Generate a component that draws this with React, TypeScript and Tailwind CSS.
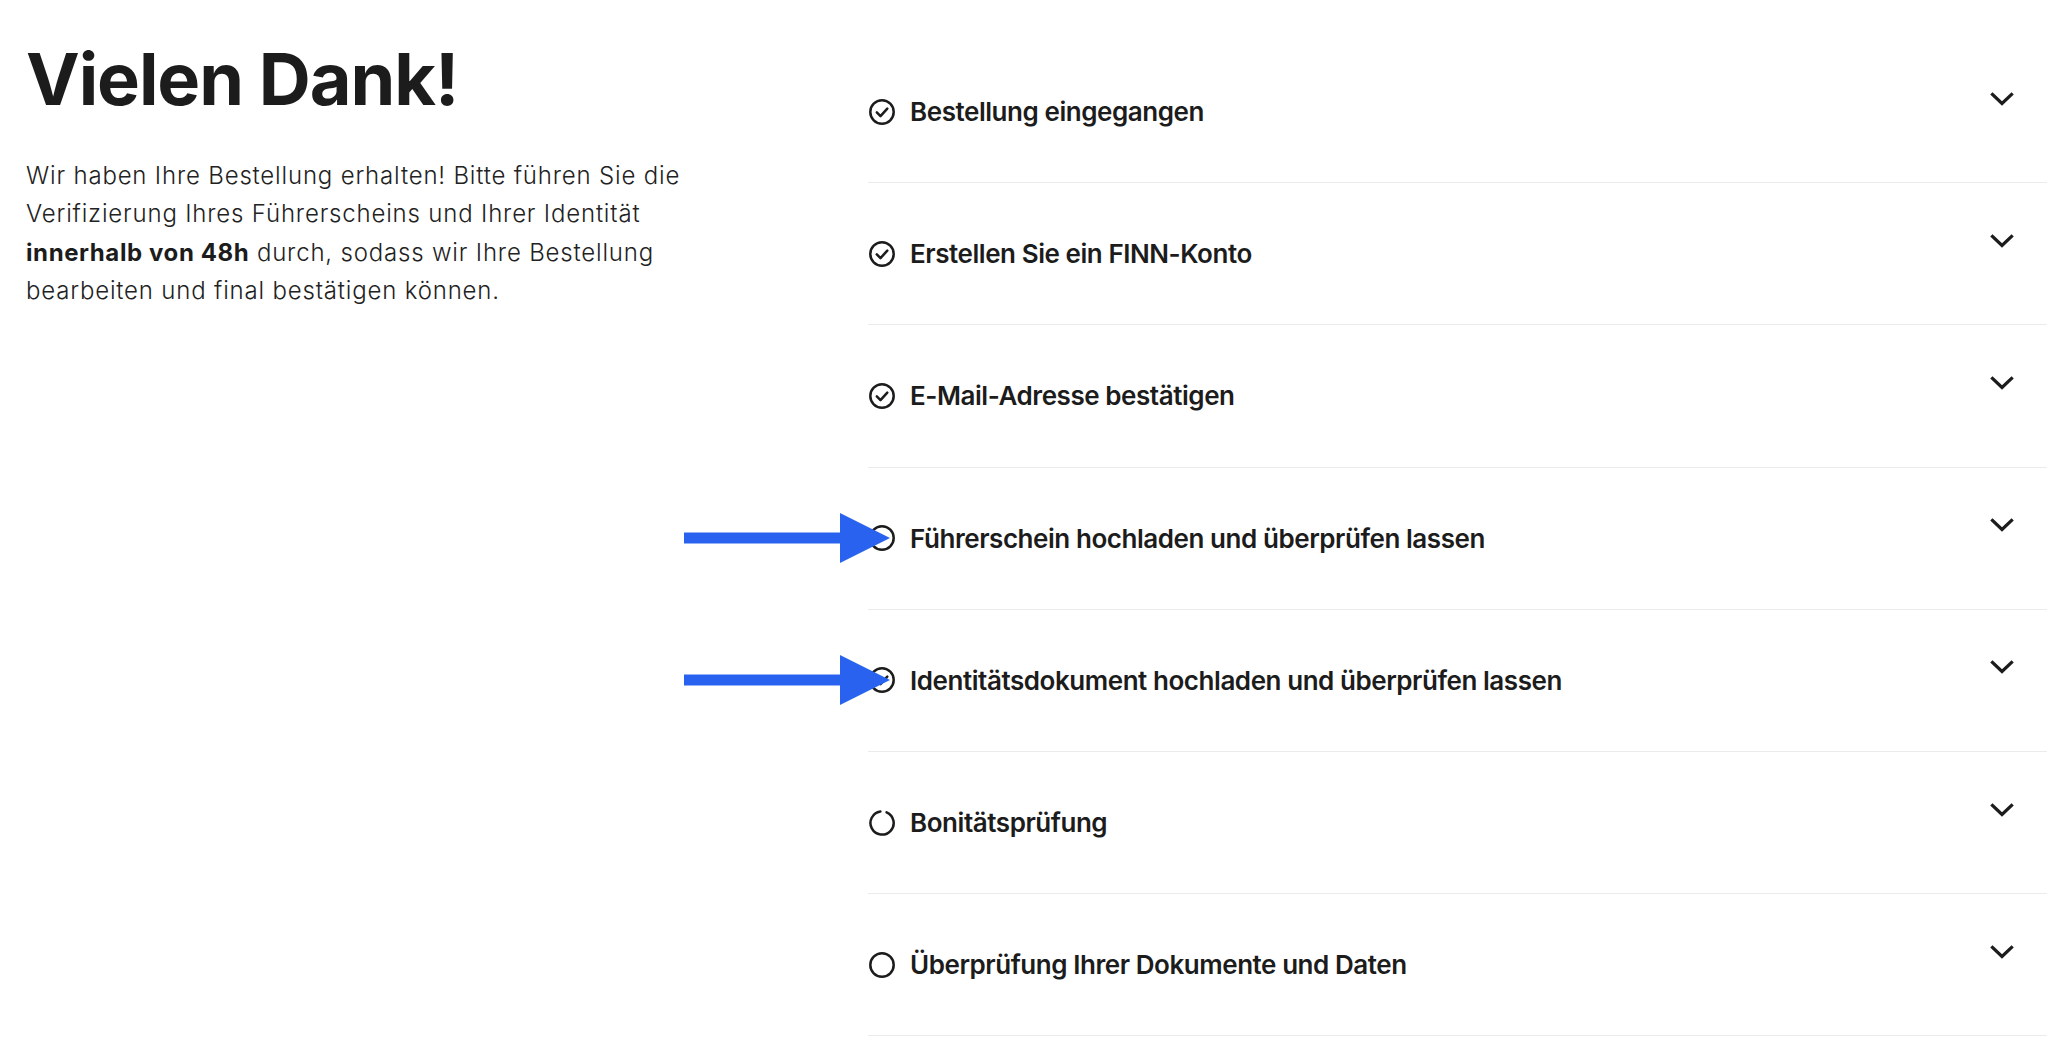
import React from 'react';

type Status = 'done' | 'open' | 'loading';

const steps: { title: string; status: Status; arrow?: boolean }[] = [
  { title: 'Bestellung eingegangen', status: 'done' },
  { title: 'Erstellen Sie ein FINN-Konto', status: 'done' },
  { title: 'E-Mail-Adresse bestätigen', status: 'done' },
  { title: 'Führerschein hochladen und überprüfen lassen', status: 'open', arrow: true },
  { title: 'Identitätsdokument hochladen und überprüfen lassen', status: 'done', arrow: true },
  { title: 'Bonitätsprüfung', status: 'loading' },
  { title: 'Überprüfung Ihrer Dokumente und Daten', status: 'open' },
];

const StatusIcon = ({ status }: { status: Status }) => {
  if (status === 'loading') {
    return (
      <svg width="28" height="28" viewBox="0 0 28 28" fill="none" className="shrink-0">
        <path
          d="M18.6 3.3 A11.6 11.6 0 1 1 12.4 2.5"
          stroke="#1c1c1c"
          strokeWidth="2.5"
          strokeLinecap="round"
        />
      </svg>
    );
  }
  return (
    <svg width="28" height="28" viewBox="0 0 28 28" fill="none" className="shrink-0">
      <circle cx="14" cy="14" r="11.7" stroke="#1c1c1c" strokeWidth="2.5" />
      {status === 'done' && (
        <path
          d="M8.8 14.4 L12.5 18.1 L19.3 10.6"
          stroke="#1c1c1c"
          strokeWidth="2.5"
          strokeLinecap="round"
          strokeLinejoin="round"
        />
      )}
    </svg>
  );
};

// blue annotation arrow pointing at the step icon
const Arrow = () => (
  <svg
    width="206"
    height="50"
    viewBox="0 0 206 50"
    className="absolute left-[-184px] top-1/2 -translate-y-1/2 pointer-events-none"
  >
    <rect x="0" y="19.5" width="160" height="11" fill="#2a62f0" />
    <polygon points="156,0 206,25 156,50" fill="#2a62f0" />
  </svg>
);

const Chevron = () => (
  <svg width="24" height="14" viewBox="0 0 24 14" fill="none" className="shrink-0">
    <polyline
      points="2.5,2.5 12,11.5 21.5,2.5"
      stroke="#1c1c1c"
      strokeWidth="3.2"
      strokeLinecap="square"
      strokeLinejoin="miter"
    />
  </svg>
);

export default function App() {
  return (
    <div
      className="min-h-screen bg-white text-[#1c1c1c] pt-[41px] pl-[26px] pr-[25px]"
      style={{ fontFamily: 'Inter, "Noto Sans", sans-serif' }}
    >
      <div className="flex">
        <div className="w-[842px] shrink-0">
          <h1 className="text-[72px] leading-none font-bold tracking-[-0.015em] mt-[2px]">
            Vielen Dank!
          </h1>
          <p className="mt-[42px] max-w-[700px] text-[24px] leading-[38.4px] font-light tracking-[0.034em] text-[#222]">
            Wir haben Ihre Bestellung erhalten! Bitte führen Sie die Verifizierung Ihres
            Führerscheins und Ihrer Identität{' '}
            <span className="font-bold tracking-[0.025em] text-[#1c1c1c]">innerhalb von 48h</span>{' '}
            durch, sodass wir Ihre Bestellung bearbeiten und final bestätigen können.
          </p>
        </div>

        <div className="flex-1">
          {steps.map((step) => (
            <div
              key={step.title}
              className="relative flex items-center h-[142.2px] border-b border-[#ebebeb]"
            >
              <div className="flex items-center gap-[14px] flex-1">
                <StatusIcon status={step.status} />
                <span className="text-[26px] font-semibold tracking-[-0.017em]">
                  {step.title}
                </span>
              </div>
              <div className="mr-[33px] -translate-y-[13px]">
                <Chevron />
              </div>
              {step.arrow && <Arrow />}
            </div>
          ))}
        </div>
      </div>
    </div>
  );
}
